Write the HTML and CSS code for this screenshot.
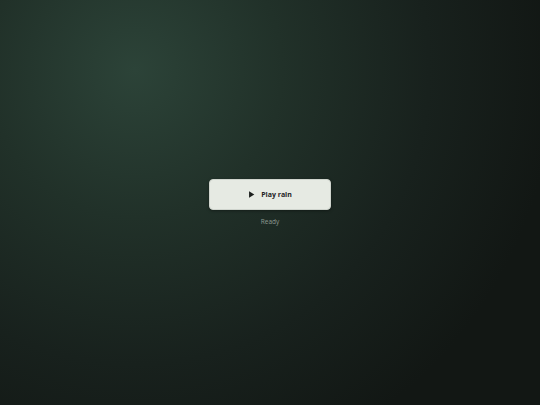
FILE: index.html
```html
<!DOCTYPE html>
<html>
<head>
<meta charset="utf-8">
<link rel="stylesheet" href="styles.css">
</head>
<body>
<main class="stage">
  <button class="play-btn" type="button">
    <svg class="play-icon" viewBox="0 0 10 10" width="7" height="7"><path d="M1.5 0.5 L9 5 L1.5 9.5 Z" fill="#1c1f1d"/></svg>
    <span class="label">Play rain</span>
  </button>
  <div class="status">Ready</div>
</main>
</body>
</html>
```

FILE: styles.css
```css
html, body {
  margin: 0;
  padding: 0;
  width: 100%;
  height: 100%;
}
body {
  background: radial-gradient(ellipse 420px 420px at 135px 70px, #2c4338 0%, #213129 35%, #18211d 70%, #121714 100%);
  font-family: "Open Sans", "Noto Sans", sans-serif;
}
.stage {
  height: 100%;
  display: flex;
  flex-direction: column;
  align-items: center;
  justify-content: center;
  gap: 7px;
}
.play-btn {
  width: 122px;
  height: 31px;
  box-sizing: border-box;
  border: 1px solid #cfd4cd;
  border-radius: 4px;
  background: #e6eae3;
  display: flex;
  align-items: center;
  justify-content: center;
  gap: 6px;
  padding: 0;
  box-shadow: 0 1px 3px rgba(0,0,0,0.35);
  font-family: inherit;
  cursor: pointer;
}
.play-icon {
  display: block;
}
.label {
  font-size: 7px;
  font-weight: 700;
  color: #1e221f;
}
.status {
  font-size: 6.5px;
  color: #8d9a92;
  line-height: 10px;
}
```
